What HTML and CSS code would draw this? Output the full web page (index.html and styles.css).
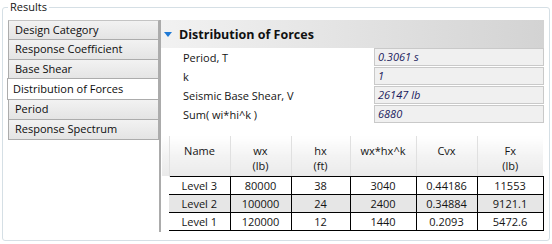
FILE: index.html
```html
<!DOCTYPE html>
<html lang="en">
<head>
    <meta charset="UTF-8">
    <title>Results - Distribution of Forces</title>
    <link rel="stylesheet" href="styles.css">
</head>
<body>
    <fieldset class="results">
        <legend>Results</legend>
        <div class="layout">
            <ul class="tabs">
                <li class="tab">Design Category</li>
                <li class="tab">Response Coefficient</li>
                <li class="tab">Base Shear</li>
                <li class="tab active">Distribution of Forces</li>
                <li class="tab">Period</li>
                <li class="tab">Response Spectrum</li>
            </ul>

            <div class="panel">
                <div class="panel-header">
                    <span class="caret"></span>
                    <h2>Distribution of Forces</h2>
                </div>

                <div class="props">
                    <div class="prop"><span class="prop-label">Period, T</span><span class="prop-value">0.3061 s</span></div>
                    <div class="prop"><span class="prop-label">k</span><span class="prop-value">1</span></div>
                    <div class="prop"><span class="prop-label">Seismic Base Shear, V</span><span class="prop-value">26147 lb</span></div>
                    <div class="prop"><span class="prop-label">Sum( wi*hi^k )</span><span class="prop-value">6880</span></div>
                </div>

                <table class="forces">
                    <thead>
                        <tr>
                            <th class="row-head"></th>
                            <th class="c1">Name</th>
                            <th class="c2">wx<br>(lb)</th>
                            <th class="c3">hx<br>(ft)</th>
                            <th class="c4">wx*hx^k</th>
                            <th class="c5">Cvx</th>
                            <th class="c6">Fx<br>(lb)</th>
                        </tr>
                    </thead>
                    <tbody>
                        <tr>
                            <td class="row-head"></td>
                            <td>Level 3</td><td>80000</td><td>38</td><td>3040</td><td>0.44186</td><td>11553</td>
                        </tr>
                        <tr class="alt">
                            <td class="row-head"></td>
                            <td>Level 2</td><td>100000</td><td>24</td><td>2400</td><td>0.34884</td><td>9121.1</td>
                        </tr>
                        <tr>
                            <td class="row-head"></td>
                            <td>Level 1</td><td>120000</td><td>12</td><td>1440</td><td>0.2093</td><td>5472.6</td>
                        </tr>
                    </tbody>
                </table>
            </div>
        </div>
    </fieldset>
</body>
</html>
```

FILE: styles.css
```css
body, html {
    margin: 0;
    padding: 0;
    background: #fff;
    font-family: "Open Sans", sans-serif;
    font-size: 11px;
    color: #141414;
}

.results {
    margin: 0 2px 0 2px;
    padding: 0 5px 0 5px;
    height: 241px;
    box-sizing: border-box;
    border: 1px solid #d5dfe5;
    border-radius: 3px;
}

.results legend {
    padding: 0 2px;
    line-height: 14px;
}

.layout {
    display: flex;
    height: 212px;
    margin-top: 6px;
}

.tabs {
    list-style: none;
    margin: 0;
    padding: 0;
    width: 151px;
}

.tab {
    height: 20px;
    box-sizing: border-box;
    border: 1px solid #acacac;
    border-top-color: #c4c4c4;
    background: linear-gradient(#f2f2f2, #e4e4e4);
    padding-left: 6px;
    line-height: 18px;
    white-space: nowrap;
    color: #0c0c0c;
}

.tab + .tab {
    border-top: none;
}

.tab.active {
    position: relative;
    height: 22px;
    margin: -2px 0 0 -1px;
    border: 1px solid #acacac;
    background: #fff;
    padding-left: 5px;
    line-height: 20px;
}

.panel {
    flex: 1;
    border-left: 2px solid #ababab;
    display: flex;
    flex-direction: column;
}

.panel-header {
    height: 28px;
    display: flex;
    align-items: center;
    padding-left: 3px;
    background: linear-gradient(to right, #f2f2f2, #d3d3d3);
}

.caret {
    width: 0;
    height: 0;
    border-left: 4px solid transparent;
    border-right: 4px solid transparent;
    border-top: 5px solid #1f7ad6;
    margin: 1px 7px 0 0;
}

.panel-header h2 {
    margin: 0;
    font-size: 12.5px;
    font-weight: 700;
    color: #111;
}

.props {
    padding-left: 22px;
}

.prop {
    display: flex;
    align-items: center;
    height: 19px;
}

.prop-label {
    flex: 1;
}

.prop-value {
    width: 170px;
    height: 18px;
    box-sizing: border-box;
    margin-bottom: 1px;
    border: 1px solid #c9c9c9;
    background: #f0f0f0;
    padding-left: 3px;
    line-height: 16px;
    font-style: italic;
    color: #1c1c5e;
}

.forces {
    margin: 12px 0 0 1px;
    width: 381px;
    border-collapse: collapse;
    table-layout: fixed;
    text-align: center;
}

.forces th {
    height: 40px;
    padding: 7px 0 0;
    box-sizing: border-box;
    vertical-align: top;
    font-weight: normal;
    line-height: 15px;
    background: linear-gradient(#ffffff, #f3f3f3 50%, #eaeaea);
    border-right: 1px solid #e0e0e0;
    border-bottom: 1px solid #000;
}

.forces th.row-head {
    width: 7px;
    border-bottom: none;
}

.forces .c1 { width: 61px; }
.forces .c2 { width: 61px; }
.forces .c3 { width: 59px; }
.forces .c4 { width: 66px; }
.forces .c5 { width: 61px; }
.forces .c6 { width: 66px; border-right: none; }

.forces td {
    height: 17px;
    padding: 0;
    line-height: 17px;
    border-right: 1px solid #000;
    border-bottom: 1px solid #000;
}

.forces td.row-head {
    border: none;
}

.forces .alt td {
    background: #e6e6e6;
}

.forces .alt td.row-head {
    background: #fff;
}
```
